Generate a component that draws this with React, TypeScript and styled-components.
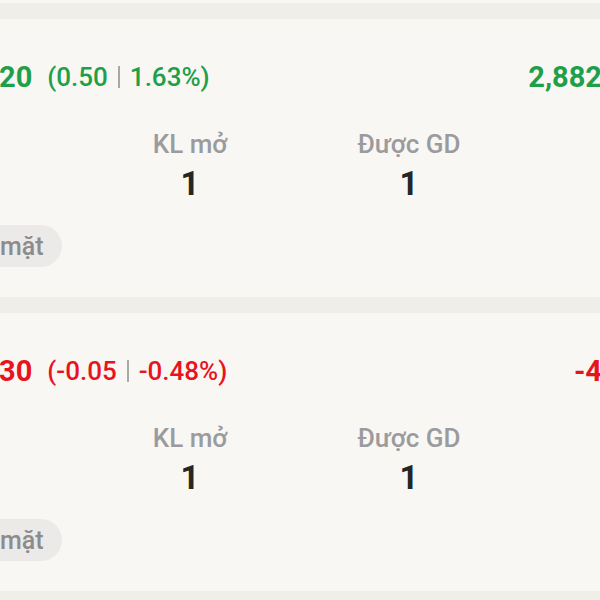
import styled, { createGlobalStyle } from "styled-components";

const GlobalStyle = createGlobalStyle`
  html, body {
    margin: 0;
    padding: 0;
    background: #efeee9;
    overflow: hidden;
  }
  body {
    font-family: Roboto, "Noto Sans", "Liberation Sans", sans-serif;
  }
`;

const List = styled.div`
  width: 700px;
  display: flex;
  flex-direction: column;
  gap: 16px;
  background: #efeee9;
`;

const Card = styled.section`
  background: #f8f7f4;
  height: 278px;
  box-sizing: border-box;
  padding-top: 38px;
  display: flex;
  flex-direction: column;

  &:first-child {
    height: 3px;
    padding: 0;
    overflow: hidden;
  }
`;

const PriceRow = styled.div<{ $up: boolean }>`
  height: 40px;
  display: flex;
  align-items: center;
  color: ${(p) => (p.$up ? "#1e9f48" : "#e8141d")};
`;

const PriceMain = styled.div`
  display: flex;
  align-items: center;
  gap: 15px;
`;

const Price = styled.span`
  font-size: 29px;
  font-weight: 700;
  margin-left: -1px;
`;

const Change = styled.span`
  font-size: 26px;
  font-weight: 500;
  display: flex;
  align-items: center;
`;

const Divider = styled.span`
  display: inline-block;
  width: 2px;
  height: 22px;
  background: #a8a8a8;
  margin: 0 10px 0 10px;
`;

const Total = styled.span`
  margin-left: auto;
  margin-right: 41px;
  font-size: 29px;
  font-weight: 700;
`;

const Stats = styled.div`
  margin-top: 32px;
  padding-left: 80px;
  display: grid;
  grid-template-columns: 220px 218px;
`;

const Stat = styled.div`
  display: flex;
  flex-direction: column;
  align-items: center;
  gap: 10px;
`;

const Label = styled.span`
  font-size: 26px;
  font-weight: 500;
  line-height: 30px;
  color: #9b9b9e;
`;

const Value = styled.span`
  font-size: 33px;
  font-weight: 700;
  line-height: 30px;
  color: #262626;
`;

const Chip = styled.div`
  margin-top: 26px;
  margin-left: -40px;
  align-self: flex-start;
  height: 42px;
  display: flex;
  align-items: center;
  padding: 0 18px 0 40px;
  border-radius: 21px;
  background: #ebeae8;
  color: #8c8c8e;
  font-size: 25px;
  font-weight: 500;
`;

type Position = {
  price: string;
  change: string;
  pct: string;
  total: string;
  up: boolean;
};

const positions: Position[] = [
  { price: "20", change: "0.50", pct: "1.63%", total: "2,882,000", up: true },
  { price: "30", change: "-0.05", pct: "-0.48%", total: "-4,000", up: false },
];

export default function App() {
  return (
    <>
      <GlobalStyle />
      <List>
        <Card />
        {positions.map((p) => (
          <Card key={p.price}>
            <PriceRow $up={p.up}>
              <PriceMain>
                <Price>{p.price}</Price>
                <Change>
                  ({p.change}
                  <Divider />
                  {p.pct})
                </Change>
              </PriceMain>
              <Total>{p.total}</Total>
            </PriceRow>
            <Stats>
              <Stat>
                <Label>KL mở</Label>
                <Value>1</Value>
              </Stat>
              <Stat>
                <Label>Được GD</Label>
                <Value>1</Value>
              </Stat>
            </Stats>
            <Chip>mặt</Chip>
          </Card>
        ))}
      </List>
    </>
  );
}
